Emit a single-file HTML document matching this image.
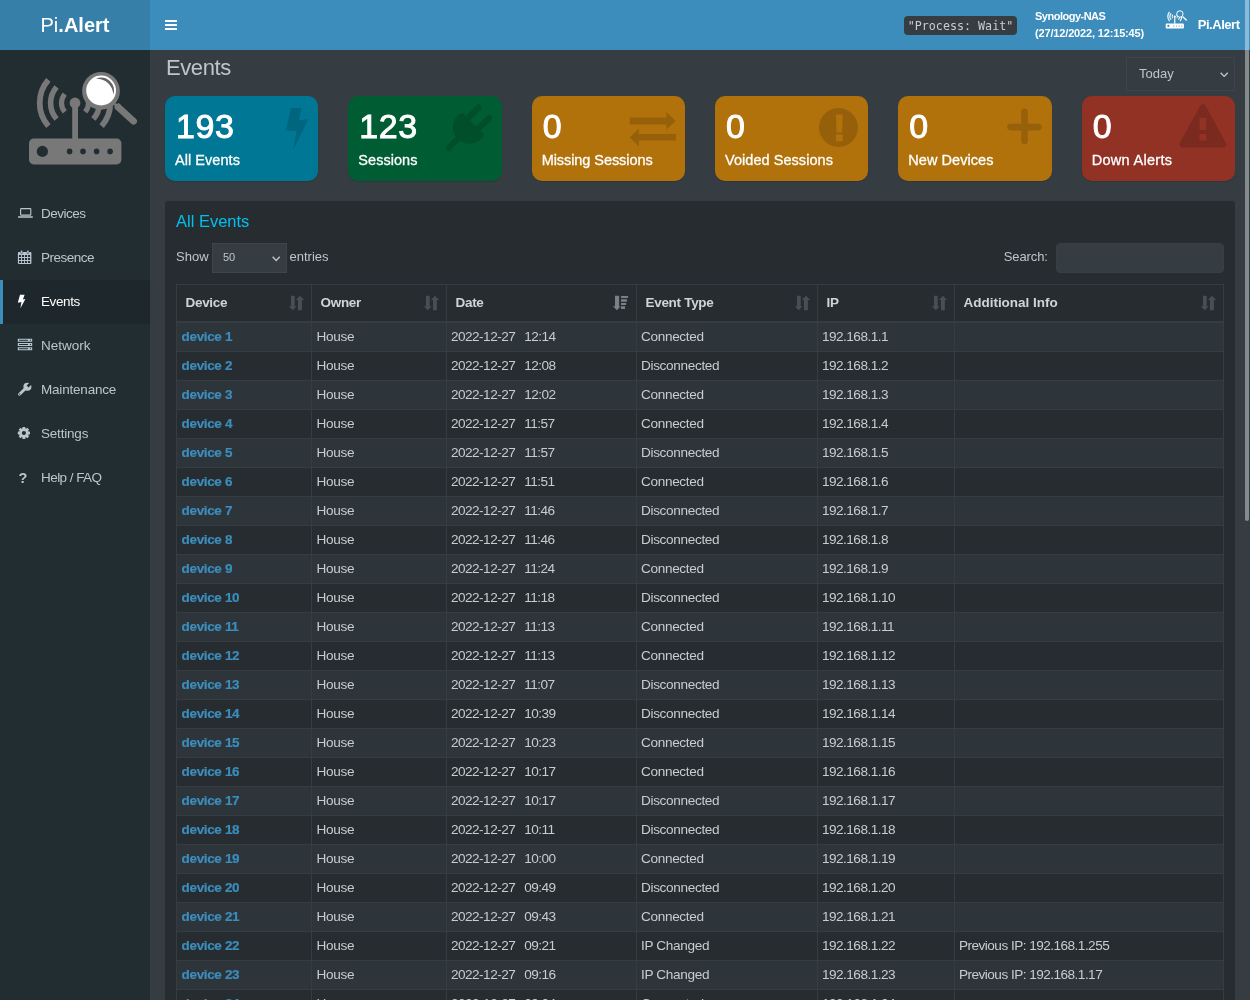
<!DOCTYPE html>
<html lang="en">
<head>
<meta charset="utf-8">
<title>Pi.Alert - Events</title>
<style>
*{box-sizing:border-box}
html,body{margin:0;padding:0}
body{width:1250px;height:1000px;overflow:hidden;background:#353c42;font-family:"Liberation Sans",sans-serif;font-size:13px;color:#bec5cb;position:relative}
#wrap{position:absolute;left:0;top:0;width:1250px;height:1000px;overflow:hidden;will-change:transform}
a{text-decoration:none}
/* header */
.logo{position:absolute;left:0;top:0;width:150px;height:50px;background:#367fa9;color:#fff;font-size:20px;line-height:50px;text-align:center;font-weight:300}
.logo b{font-weight:700}
.navbar{position:absolute;left:150px;top:0;width:1100px;height:50px;background:#3c8dbc}
.burger{position:absolute;left:15px;top:20px;width:12px;height:10px}
.burger i{position:absolute;left:0;width:12px;height:2px;background:#fff;border-radius:.5px}
.code{position:absolute;left:754px;top:16px;width:113px;height:19px;background:#353c42;border-radius:4px;color:#ccc;font-family:"DejaVu Sans Mono","Liberation Mono",monospace;font-size:11.7px;line-height:21px;text-align:center;white-space:nowrap}
.srv{position:absolute;left:885px;top:8px;color:#fff;font-weight:700;font-size:11px;line-height:17px;white-space:nowrap;letter-spacing:-.16px}
.srv b{letter-spacing:-.5px}
.usr{position:absolute;left:1047.7px;top:16px;color:#fff;font-weight:700;font-size:13px;line-height:18px;white-space:nowrap;letter-spacing:-.45px}
.usricon{position:absolute;left:1009.6px;top:6.3px;width:29.55px;height:25.61px}
/* sidebar */
.sidebar{position:absolute;left:0;top:50px;width:150px;height:950px;background:#222d32}
.sidebar .biglogo{position:absolute;left:0;top:0;width:150px;height:130px}
.menu{position:absolute;left:0;top:142px;width:150px;margin:0;padding:0;list-style:none}
.menu li{height:44px;line-height:44px;color:#b8c7ce;position:relative;font-size:13.5px;letter-spacing:-.4px}
.menu li.active{background:#1e282c;box-shadow:inset 3px 0 0 #3c8dbc;color:#fff}
.menu li span{position:absolute;left:41px;top:0;white-space:nowrap}
.menu li svg{position:absolute;fill:currentColor;overflow:visible}
.menu li em{position:absolute;left:18.6px;top:0;font-style:normal;font-weight:700;font-size:14.5px}
/* content */
.content{position:absolute;left:150px;top:50px;width:1100px;height:950px}
h1{position:absolute;left:16px;top:5px;margin:0;font-size:22px;font-weight:400;line-height:26px;color:#bec5cb;letter-spacing:-.4px}
.period{position:absolute;left:976px;top:7px;width:109px;height:34px;border:1px solid #3d444b;background:#353c42;color:#bec5cb;font-size:13px;line-height:32px;padding-left:12px}
.period svg{position:absolute;right:5.3px;top:13.6px;width:8.4px;height:5.6px}
.sb{position:absolute;top:46px;width:153.3px;height:85px;border-radius:10px;color:#fff;box-shadow:0 1px 1px rgba(0,0,0,.1);overflow:hidden}
.sb h3{position:absolute;left:11px;top:10px;margin:0;font-size:34px;line-height:40px;font-weight:400;white-space:nowrap;-webkit-text-stroke:.9px #fff;letter-spacing:.6px}
.sb p{position:absolute;left:10px;top:55px;margin:0;font-size:14.5px;line-height:18px;font-weight:400;white-space:nowrap;-webkit-text-stroke:.3px #fff;letter-spacing:.05px}
.sb svg{position:absolute;fill:#000;opacity:.15}
.aqua{background:#007895}.green{background:#005c32}.yellow{background:#b1720c}.red{background:#913225}
.box{position:absolute;left:15px;top:151px;width:1070px;height:900px;background:#272c30;border-radius:3px}
.box h2{position:absolute;left:11px;top:9px;margin:0;font-size:16.5px;font-weight:400;line-height:22px;color:#00c0ef}
.len{position:absolute;left:0;top:42px;height:30px;line-height:28px;white-space:nowrap;width:400px}
.len b{position:absolute;top:0;font-weight:400}
.len .sel{position:absolute;left:47px;top:0;width:75px;height:30px;border:1px solid #3d444b;background:#353c42;font-size:11px;padding-left:10px;line-height:27px}
.len .sel svg{position:absolute;right:5.2px;top:12px;width:8.4px;height:5.6px}
.search{position:absolute;right:11px;top:42px;height:30px;line-height:28px;white-space:nowrap;letter-spacing:-.1px}
.search i{display:inline-block;vertical-align:top;width:167.7px;height:30px;margin-left:8.5px;background:#353c42;border:1px solid #373e44;border-radius:4px}
table{position:absolute;left:11px;top:83px;width:1048px;border-collapse:separate;border-spacing:0;table-layout:fixed;border-left:1px solid #353c42;border-top:1px solid #353c42}
th,td{border-right:1px solid #353c42;border-bottom:1px solid #353c42;overflow:hidden;white-space:nowrap;text-align:left}
th{height:38px;border-bottom-width:2px;padding:0 0 2px 8.5px;font-weight:700;font-size:13.5px;letter-spacing:-.3px;color:#d0d4d8;position:relative}
th svg{position:absolute;right:6px;top:10px;width:17px;height:16px;fill:#484e53}
th svg.on{fill:#7a8087;right:7px}
td{height:29px;padding:0 0 2px 4px;font-size:13.6px;letter-spacing:-.34px;color:#c8ccd0}
td a{color:#3c8dbc;font-weight:700;font-size:13.5px;letter-spacing:-.35px;-webkit-text-stroke:.2px #3c8dbc}
td:nth-child(1),td:nth-child(2){padding-left:4.6px}
td:nth-child(3),td:nth-child(5),td:nth-child(6){letter-spacing:-.53px}
tbody tr:nth-child(odd){background:#2d343a}
.sp{display:inline-block;width:9px}
.scroll{position:absolute;left:1245.3px;top:-3px;width:3.3px;height:524px;background:rgba(255,255,255,.4);border-radius:2px}
</style>
</head>
<body>
<div id="wrap">
<div class="logo">Pi<b>.Alert</b></div>
<div class="navbar">
  <div class="burger"><i style="top:0"></i><i style="top:4px"></i><i style="top:8px"></i></div>
  <div class="code">"Process: Wait"</div>
  <div class="srv"><b>Synology-NAS</b><br>(27/12/2022, 12:15:45)</div>
  <svg class="usricon" viewBox="0 0 150 130">
<g fill="none" stroke="#fff">
<path d="M64.81 44.14A13.5 13.5 0 0 0 64.81 61.86" stroke-width="5.2"/>
<path d="M56.59 36.99A24.4 24.4 0 0 0 56.59 69.01" stroke-width="5.6"/>
<path d="M48.36 29.84A35.3 35.3 0 0 0 48.36 76.16" stroke-width="5.8"/>
<path d="M85.19 44.14A13.5 13.5 0 0 1 85.19 61.86" stroke-width="5.2"/>
<path d="M93.41 36.99A24.4 24.4 0 0 1 93.41 69.01" stroke-width="5.6"/>
<path d="M101.64 29.84A35.3 35.3 0 0 1 101.64 76.16" stroke-width="5.8"/>
</g>
<rect x="72.2" y="53" width="5.8" height="37" fill="#fff"/>
<circle cx="75" cy="53" r="5.4" fill="#fff"/>
<rect x="29" y="88.6" width="92.4" height="25.8" rx="4.7" fill="#fff"/>
<circle cx="42.4" cy="101.4" r="5.6" fill="#3c8dbc"/>
<circle cx="69.6" cy="101.4" r="2.8" fill="#3c8dbc"/><circle cx="83" cy="101.4" r="2.8" fill="#3c8dbc"/><circle cx="96.6" cy="101.4" r="2.8" fill="#3c8dbc"/><circle cx="110.1" cy="101.4" r="2.8" fill="#3c8dbc"/>
<path d="M113.6 53.2L119.5 58.3" stroke="#fff" stroke-width="2.6" fill="none"/>
<path d="M118 57L133.6 71.2" stroke="#fff" stroke-width="6.8" stroke-linecap="round" fill="none"/>
<path d="M116.5 57.9L119.8 54" stroke="#fff" stroke-width="3" fill="none"/>
<circle cx="100.9" cy="40.5" r="16.2" fill="#3c8dbc" stroke="#fff" stroke-width="5"/>

</svg>
  <div class="usr">Pi.Alert</div>
</div>
<div class="sidebar">
  <svg class="biglogo" viewBox="0 0 150 130">
<g fill="none" stroke="#787878">
<path d="M64.81 44.14A13.5 13.5 0 0 0 64.81 61.86" stroke-width="5.2"/>
<path d="M56.59 36.99A24.4 24.4 0 0 0 56.59 69.01" stroke-width="5.6"/>
<path d="M48.36 29.84A35.3 35.3 0 0 0 48.36 76.16" stroke-width="5.8"/>
<path d="M85.19 44.14A13.5 13.5 0 0 1 85.19 61.86" stroke-width="5.2"/>
<path d="M93.41 36.99A24.4 24.4 0 0 1 93.41 69.01" stroke-width="5.6"/>
<path d="M101.64 29.84A35.3 35.3 0 0 1 101.64 76.16" stroke-width="5.8"/>
</g>
<rect x="72.2" y="53" width="5.8" height="37" fill="#787878"/>
<circle cx="75" cy="53" r="5.4" fill="#787878"/>
<rect x="29" y="88.6" width="92.4" height="25.8" rx="4.7" fill="#787878"/>
<circle cx="42.4" cy="101.4" r="5.6" fill="#222d32"/>
<circle cx="69.6" cy="101.4" r="2.8" fill="#222d32"/><circle cx="83" cy="101.4" r="2.8" fill="#222d32"/><circle cx="96.6" cy="101.4" r="2.8" fill="#222d32"/><circle cx="110.1" cy="101.4" r="2.8" fill="#222d32"/>
<path d="M113.6 53.2L119.5 58.3" stroke="#787878" stroke-width="2.6" fill="none"/>
<path d="M118 57L133.6 71.2" stroke="#787878" stroke-width="6.8" stroke-linecap="round" fill="none"/>
<path d="M116.5 57.9L119.8 54" stroke="#787878" stroke-width="3" fill="none"/>
<circle cx="101" cy="40.9" r="18.9" fill="#787878"/><circle cx="101.1" cy="40.5" r="14.9" fill="#fff"/>
<path d="M95.98 28.77A12.8 12.8 0 0 1 113.27 44.46A16.2 16.2 0 0 0 95.98 28.77Z" fill="#636363"/>
</svg>
  <ul class="menu">
    <li><svg style="left:17px;top:13px;width:17px;height:17px" viewBox="0 0 17 17"><rect x="3.6" y="3.6" width="10.2" height="6.5" rx="0.7" fill="none" stroke="currentColor" stroke-width="1.1"/><rect x="0.8" y="11.3" width="15.2" height="1.5" rx="0.7"/></svg><span style="letter-spacing:-.5px">Devices</span></li>
    <li><svg style="left:17px;top:13px;width:17px;height:17px" viewBox="0 0 17 17"><path fill-rule="evenodd" d="M1.9 2.9H13.4a1 1 0 0 1 1 1V14a1 1 0 0 1-1 1H1.9a1 1 0 0 1-1-1V3.9a1 1 0 0 1 1-1ZM2.00 6.10h2.1v2h-2.1ZM5.00 6.10h2.1v2h-2.1ZM8.00 6.10h2.1v2h-2.1ZM11.00 6.10h2.1v2h-2.1ZM2.00 9.00h2.1v2h-2.1ZM5.00 9.00h2.1v2h-2.1ZM8.00 9.00h2.1v2h-2.1ZM11.00 9.00h2.1v2h-2.1ZM2.00 11.90h2.1v2h-2.1ZM5.00 11.90h2.1v2h-2.1ZM8.00 11.90h2.1v2h-2.1ZM11.00 11.90h2.1v2h-2.1Z"/><rect x="3.6" y="1.3" width="2" height="3.4" rx="0.9" stroke="#222d32" stroke-width="0.5"/><rect x="9.9" y="1.3" width="2" height="3.4" rx="0.9" stroke="#222d32" stroke-width="0.5"/></svg><span style="letter-spacing:-.5px">Presence</span></li>
    <li class="active"><svg style="left:17px;top:13px;width:17px;height:17px" viewBox="0 0 17 17"><path d="M3 1.8H7.6L5.9 6.6L8.4 6L3.4 15.2L4.4 8.9L0.8 9.8Z"/></svg><span>Events</span></li>
    <li><svg style="left:17px;top:13px;width:17px;height:17px" viewBox="0 0 17 17"><path fill-rule="evenodd" d="M0.8 1.8h14.4v3h-14.4ZM2 2.8v1h9v-1ZM12.9 2.8v1h1.1v-1ZM0.8 6.0h14.4v3h-14.4ZM2 7.0v1h9v-1ZM12.9 7.0v1h1.1v-1ZM0.8 10.2h14.4v3h-14.4ZM2 11.2v1h9v-1ZM12.9 11.2v1h1.1v-1Z"/></svg><span style="letter-spacing:0">Network</span></li>
    <li><svg style="left:17px;top:13px;width:17px;height:17px" viewBox="0 0 17 17"><path d="M2.5 13.3L9.3 6.7" stroke="currentColor" stroke-width="2.9" stroke-linecap="round" fill="none"/><circle cx="10.4" cy="5.7" r="4"/><path d="M10.6 5.5L15.5 0.6" stroke="#222d32" stroke-width="2.7" fill="none"/><circle cx="2.7" cy="13.1" r="0.7" fill="#222d32"/></svg><span style="letter-spacing:-.2px">Maintenance</span></li>
    <li><svg style="left:17px;top:13px;width:17px;height:17px" viewBox="0 0 17 17"><g transform="translate(6.9 8)"><path fill-rule="evenodd" d="M-4.7 0a4.7 4.7 0 1 0 9.4 0a4.7 4.7 0 1 0 -9.4 0ZM-2.1 0a2.1 2.1 0 1 1 4.2 0a2.1 2.1 0 1 1 -4.2 0Z"/><rect x="-1.45" y="-6.1" width="2.9" height="3" rx="0.4" transform="rotate(0)"/><rect x="-1.45" y="-6.1" width="2.9" height="3" rx="0.4" transform="rotate(45)"/><rect x="-1.45" y="-6.1" width="2.9" height="3" rx="0.4" transform="rotate(90)"/><rect x="-1.45" y="-6.1" width="2.9" height="3" rx="0.4" transform="rotate(135)"/><rect x="-1.45" y="-6.1" width="2.9" height="3" rx="0.4" transform="rotate(180)"/><rect x="-1.45" y="-6.1" width="2.9" height="3" rx="0.4" transform="rotate(225)"/><rect x="-1.45" y="-6.1" width="2.9" height="3" rx="0.4" transform="rotate(270)"/><rect x="-1.45" y="-6.1" width="2.9" height="3" rx="0.4" transform="rotate(315)"/></g></svg><span style="letter-spacing:-.2px">Settings</span></li>
    <li><em>?</em><span style="letter-spacing:-.55px">Help / FAQ</span></li>
  </ul>
</div>
<div class="content">
  <h1>Events</h1>
  <div class="period">Today<svg viewBox="0 0 9 6"><path d="M0.7 0.7L4.5 4.7L8.3 0.7" fill="none" stroke="#bec5cb" stroke-width="1.5"/></svg></div>
  <div class="sb aqua" style="left:15px"><h3>193</h3><p>All Events</p><svg style="left:0;top:0;width:153.3px;height:85px" viewBox="0 0 153.3 85"><path d="M126.0 12.0L136.4 12.0L134.0 24.6L143.6 23.0L128.0 54.6L131.6 35.0L120.6 34.6Z"/></svg></div>
  <div class="sb green" style="left:198.3px"><h3>123</h3><p>Sessions</p><svg style="left:0;top:0;width:153.3px;height:85px" viewBox="0 0 153.3 85"><g transform="translate(121.37 31.20) rotate(45)"><path d="M-15.63 -5.3H15.63A16.5 16.5 0 1 1 -15.63 -5.3Z"/><path d="M-7.5 -5V-20.3M7.5 -5V-20.3" stroke="#000" stroke-width="6" stroke-linecap="round" fill="none"/><path d="M0 15V29.5" stroke="#000" stroke-width="5.6" stroke-linecap="round" fill="none"/></g></svg></div>
  <div class="sb yellow" style="left:381.7px"><h3>0</h3><p style="letter-spacing:-.07px">Missing Sessions</p><svg style="left:0;top:0;width:153.3px;height:85px" viewBox="0 0 153.3 85"><path d="M97.7 21.4H134.3V16L143.9 25L134.3 33.6V28.4H97.7Z"/><path d="M143.9 38H106.9V32.6L97.7 41.5L106.9 50.6V44.6H143.9Z"/></svg></div>
  <div class="sb yellow" style="left:565px"><h3>0</h3><p>Voided Sessions</p><svg style="left:0;top:0;width:153.3px;height:85px" viewBox="0 0 153.3 85"><path fill-rule="evenodd" d="M104.0 31.5a19.5 19.5 0 1 0 39 0a19.5 19.5 0 1 0 -39 0ZM120.9 18.4h6.8l-0.7 18h-5.4ZM120.9 38.6h6.8v6.6h-6.8Z"/></svg></div>
  <div class="sb yellow" style="left:748.3px"><h3>0</h3><p>New Devices</p><svg style="left:0;top:0;width:153.3px;height:85px" viewBox="0 0 153.3 85"><path d="M112.5 31.1H140.5M126.5 15.8V45" stroke="#000" stroke-width="6.6" stroke-linecap="round" fill="none"/></svg></div>
  <div class="sb red" style="left:931.7px"><h3>0</h3><p style="letter-spacing:.3px">Down Alerts</p><svg style="left:0;top:0;width:153.3px;height:85px" viewBox="0 0 153.3 85"><path fill-rule="evenodd" stroke="#000" stroke-width="0" d="M118.3 9.6a3 3 0 0 1 5.2 0L143.9 47a3 3 0 0 1 -2.6 4.4H100.3a3 3 0 0 1 -2.6 -4.4ZM117.3 22h7.2l-0.6 12h-6ZM117.5 38h6.8v6.6h-6.8Z"/></svg></div>
  <div class="box">
    <h2>All Events</h2>
    <div class="len"><b style="left:11px">Show</b><span class="sel">50<svg viewBox="0 0 9 6"><path d="M0.7 0.7L4.5 4.7L8.3 0.7" fill="none" stroke="#bec5cb" stroke-width="1.5"/></svg></span><b style="left:124.5px">entries</b></div>
    <div class="search">Search:<i></i></div>
    <table>
      <colgroup><col style="width:135px"><col style="width:135px"><col style="width:190px"><col style="width:181px"><col style="width:137px"><col style="width:269px"></colgroup>
      <thead><tr><th>Device<svg viewBox="0 0 17 16"><path d="M3 0.85h3.7v10.45h1.9L4.8 15.2L0.75 11.3H3ZM12 0.85L16.1 4.9h-2.2V15.2h-3.9V4.9H7.9Z"/></svg></th><th>Owner<svg viewBox="0 0 17 16"><path d="M3 0.85h3.7v10.45h1.9L4.8 15.2L0.75 11.3H3ZM12 0.85L16.1 4.9h-2.2V15.2h-3.9V4.9H7.9Z"/></svg></th><th>Date<svg class="on" viewBox="0 0 17 16"><path d="M3 0.85h4.1v10.45h1.5L5 15.2L0.9 11.3H3ZM9 1h7v2h-7ZM9 4.2h5.9v2.6h-5.9ZM9 8h5.1v2h-5.1ZM9 11.3h4v2.7h-4Z"/></svg></th><th>Event Type<svg viewBox="0 0 17 16"><path d="M3 0.85h3.7v10.45h1.9L4.8 15.2L0.75 11.3H3ZM12 0.85L16.1 4.9h-2.2V15.2h-3.9V4.9H7.9Z"/></svg></th><th>IP<svg viewBox="0 0 17 16"><path d="M3 0.85h3.7v10.45h1.9L4.8 15.2L0.75 11.3H3ZM12 0.85L16.1 4.9h-2.2V15.2h-3.9V4.9H7.9Z"/></svg></th><th style="letter-spacing:-.02px">Additional Info<svg viewBox="0 0 17 16"><path d="M3 0.85h3.7v10.45h1.9L4.8 15.2L0.75 11.3H3ZM12 0.85L16.1 4.9h-2.2V15.2h-3.9V4.9H7.9Z"/></svg></th></tr></thead>
      <tbody>
<tr><td><a>device 1</a></td><td>House</td><td>2022-12-27<span class="sp"></span>12:14</td><td>Connected</td><td>192.168.1.1</td><td></td></tr>
<tr><td><a>device 2</a></td><td>House</td><td>2022-12-27<span class="sp"></span>12:08</td><td>Disconnected</td><td>192.168.1.2</td><td></td></tr>
<tr><td><a>device 3</a></td><td>House</td><td>2022-12-27<span class="sp"></span>12:02</td><td>Connected</td><td>192.168.1.3</td><td></td></tr>
<tr><td><a>device 4</a></td><td>House</td><td>2022-12-27<span class="sp"></span>11:57</td><td>Connected</td><td>192.168.1.4</td><td></td></tr>
<tr><td><a>device 5</a></td><td>House</td><td>2022-12-27<span class="sp"></span>11:57</td><td>Disconnected</td><td>192.168.1.5</td><td></td></tr>
<tr><td><a>device 6</a></td><td>House</td><td>2022-12-27<span class="sp"></span>11:51</td><td>Connected</td><td>192.168.1.6</td><td></td></tr>
<tr><td><a>device 7</a></td><td>House</td><td>2022-12-27<span class="sp"></span>11:46</td><td>Disconnected</td><td>192.168.1.7</td><td></td></tr>
<tr><td><a>device 8</a></td><td>House</td><td>2022-12-27<span class="sp"></span>11:46</td><td>Disconnected</td><td>192.168.1.8</td><td></td></tr>
<tr><td><a>device 9</a></td><td>House</td><td>2022-12-27<span class="sp"></span>11:24</td><td>Connected</td><td>192.168.1.9</td><td></td></tr>
<tr><td><a>device 10</a></td><td>House</td><td>2022-12-27<span class="sp"></span>11:18</td><td>Disconnected</td><td>192.168.1.10</td><td></td></tr>
<tr><td><a>device 11</a></td><td>House</td><td>2022-12-27<span class="sp"></span>11:13</td><td>Connected</td><td>192.168.1.11</td><td></td></tr>
<tr><td><a>device 12</a></td><td>House</td><td>2022-12-27<span class="sp"></span>11:13</td><td>Connected</td><td>192.168.1.12</td><td></td></tr>
<tr><td><a>device 13</a></td><td>House</td><td>2022-12-27<span class="sp"></span>11:07</td><td>Disconnected</td><td>192.168.1.13</td><td></td></tr>
<tr><td><a>device 14</a></td><td>House</td><td>2022-12-27<span class="sp"></span>10:39</td><td>Disconnected</td><td>192.168.1.14</td><td></td></tr>
<tr><td><a>device 15</a></td><td>House</td><td>2022-12-27<span class="sp"></span>10:23</td><td>Connected</td><td>192.168.1.15</td><td></td></tr>
<tr><td><a>device 16</a></td><td>House</td><td>2022-12-27<span class="sp"></span>10:17</td><td>Connected</td><td>192.168.1.16</td><td></td></tr>
<tr><td><a>device 17</a></td><td>House</td><td>2022-12-27<span class="sp"></span>10:17</td><td>Disconnected</td><td>192.168.1.17</td><td></td></tr>
<tr><td><a>device 18</a></td><td>House</td><td>2022-12-27<span class="sp"></span>10:11</td><td>Disconnected</td><td>192.168.1.18</td><td></td></tr>
<tr><td><a>device 19</a></td><td>House</td><td>2022-12-27<span class="sp"></span>10:00</td><td>Connected</td><td>192.168.1.19</td><td></td></tr>
<tr><td><a>device 20</a></td><td>House</td><td>2022-12-27<span class="sp"></span>09:49</td><td>Disconnected</td><td>192.168.1.20</td><td></td></tr>
<tr><td><a>device 21</a></td><td>House</td><td>2022-12-27<span class="sp"></span>09:43</td><td>Connected</td><td>192.168.1.21</td><td></td></tr>
<tr><td><a>device 22</a></td><td>House</td><td>2022-12-27<span class="sp"></span>09:21</td><td>IP Changed</td><td>192.168.1.22</td><td>Previous IP: 192.168.1.255</td></tr>
<tr><td><a>device 23</a></td><td>House</td><td>2022-12-27<span class="sp"></span>09:16</td><td>IP Changed</td><td>192.168.1.23</td><td>Previous IP: 192.168.1.17</td></tr>
<tr><td><a>device 24</a></td><td>House</td><td>2022-12-27<span class="sp"></span>09:04</td><td>Connected</td><td>192.168.1.24</td><td></td></tr>
<tr><td><a>device 25</a></td><td>House</td><td>2022-12-27<span class="sp"></span>08:58</td><td>Disconnected</td><td>192.168.1.25</td><td></td></tr>
      </tbody>
    </table>
  </div>
</div>
<div class="scroll"></div>
</div>
</body>
</html>
